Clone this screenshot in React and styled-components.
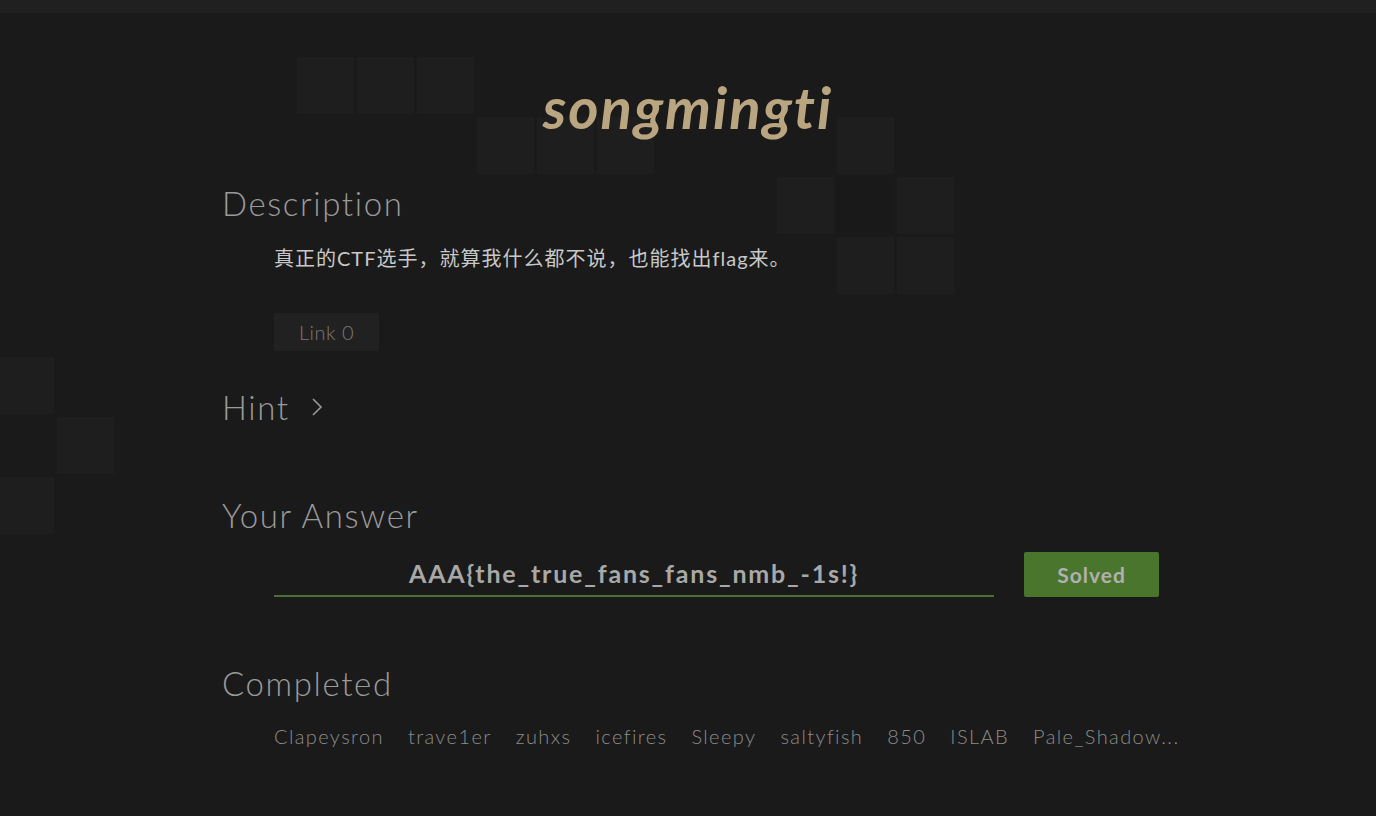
import React from 'react';
import styled, { createGlobalStyle } from 'styled-components';

const GlobalStyle = createGlobalStyle`
  html, body {
    margin: 0;
    padding: 0;
    background: #1a1a1a;
  }
  body {
    font-family: 'Lato', 'Noto Sans CJK SC', sans-serif;
  }
`;

const Page = styled.div`
  position: relative;
  min-height: 816px;
  background: #1a1a1a;
  overflow: hidden;
`;

const TopBar = styled.div`
  height: 13px;
  background: #202020;
`;

/* decorative squares behind the content */
const Backdrop = styled.div`
  position: absolute;
  top: -3px;
  left: -3px;
  display: grid;
  grid-template-columns: repeat(24, 57px);
  grid-auto-rows: 57px;
  gap: 3px;
  z-index: 0;
`;

const Tile = styled.div`
  grid-column: ${(p) => p.col};
  grid-row: ${(p) => p.row};
  background: ${(p) => (p.dark ? '#191919' : '#1e1e1e')};
`;

const Main = styled.main`
  position: relative;
  z-index: 1;
  width: 932px;
  margin: 0 auto;
  padding-top: 64px;
`;

const Title = styled.h1`
  margin: 0 0 46px;
  text-align: center;
  font-size: 58px;
  font-weight: 700;
  font-style: italic;
  letter-spacing: 2px;
  color: #b9a57f;
  line-height: 60px;
`;

const Section = styled.section`
  margin-bottom: ${(p) => p.gap || 0}px;
`;

const Heading = styled.h2`
  display: flex;
  align-items: center;
  gap: 20px;
  margin: 0;
  font-size: 33px;
  font-weight: 300;
  letter-spacing: 1.6px;
  color: #9a9a9a;
  line-height: 40px;
`;

const Body = styled.div`
  padding-left: 52px;
`;

const Description = styled.p`
  margin: 22px 0 42px;
  font-size: 20px;
  letter-spacing: 1px;
  color: #c8c8c8;
  line-height: 26px;
`;

const LinkButton = styled.button`
  width: 105px;
  height: 38px;
  border: none;
  border-radius: 2px;
  background: #212121;
  color: #7a7a7a;
  font-family: inherit;
  font-size: 20px;
  font-weight: 300;
  letter-spacing: 0.5px;
`;

const AnswerRow = styled.div`
  display: flex;
  align-items: flex-end;
  gap: 30px;
  margin-top: 16px;
`;

const AnswerField = styled.div`
  flex-shrink: 0;
  width: 720px;
  height: 44px;
  display: flex;
  align-items: center;
  justify-content: center;
  border-bottom: 2px solid #4b6f35;
  color: #a8a8a8;
  font-size: 25px;
  font-weight: 700;
  letter-spacing: 1.8px;
`;

const SolvedButton = styled.button`
  flex-shrink: 0;
  width: 135px;
  height: 45px;
  border: none;
  border-radius: 2px;
  background: #4a752d;
  color: #b0b0b0;
  font-family: inherit;
  font-size: 21px;
  font-weight: 700;
  letter-spacing: 1px;
`;

const Names = styled.div`
  display: flex;
  gap: 24px;
  margin-top: 21px;
  font-size: 20px;
  font-weight: 300;
  letter-spacing: 1.4px;
  color: #8c8c8c;
  white-space: nowrap;
`;

const Chevron = () => (
  <svg width="14" height="22" viewBox="0 0 14 22" fill="none">
    <path d="M3 3 L11 11 L3 19" stroke="#9a9a9a" strokeWidth="1.6" />
  </svg>
);

const tiles = [
  { col: 6, row: 2 }, { col: 7, row: 2 }, { col: 8, row: 2 },
  { col: 9, row: 3 }, { col: 10, row: 3 }, { col: 11, row: 3 },
  { col: 15, row: 3 },
  { col: 14, row: 4 }, { col: 15, row: 4, dark: true }, { col: 16, row: 4 },
  { col: 15, row: 5 }, { col: 16, row: 5 },
  { col: 1, row: 7 }, { col: 2, row: 8 }, { col: 1, row: 9 },
];

const solvers = ['Clapeysron', 'trave1er', 'zuhxs', 'icefires', 'Sleepy', 'saltyfish', '850', 'ISLAB', 'Pale_Shadow...'];

export default function App() {
  return (
    <Page>
      <GlobalStyle />
      <TopBar />
      <Backdrop>
        {tiles.map((t, i) => (
          <Tile key={i} col={t.col} row={t.row} dark={t.dark} />
        ))}
      </Backdrop>
      <Main>
        <Title>songmingti</Title>

        <Section gap={36}>
          <Heading>Description</Heading>
          <Body>
            <Description>真正的CTF选手，就算我什么都不说，也能找出flag来。</Description>
            <LinkButton>Link 0</LinkButton>
          </Body>
        </Section>

        <Section gap={68}>
          <Heading>
            Hint <Chevron />
          </Heading>
        </Section>

        <Section gap={66}>
          <Heading>Your Answer</Heading>
          <Body>
            <AnswerRow>
              <AnswerField>AAA{'{'}the_true_fans_fans_nmb_-1s!{'}'}</AnswerField>
              <SolvedButton>Solved</SolvedButton>
            </AnswerRow>
          </Body>
        </Section>

        <Section>
          <Heading>Completed</Heading>
          <Body>
            <Names>
              {solvers.map((n) => (
                <span key={n}>{n}</span>
              ))}
            </Names>
          </Body>
        </Section>
      </Main>
    </Page>
  );
}
